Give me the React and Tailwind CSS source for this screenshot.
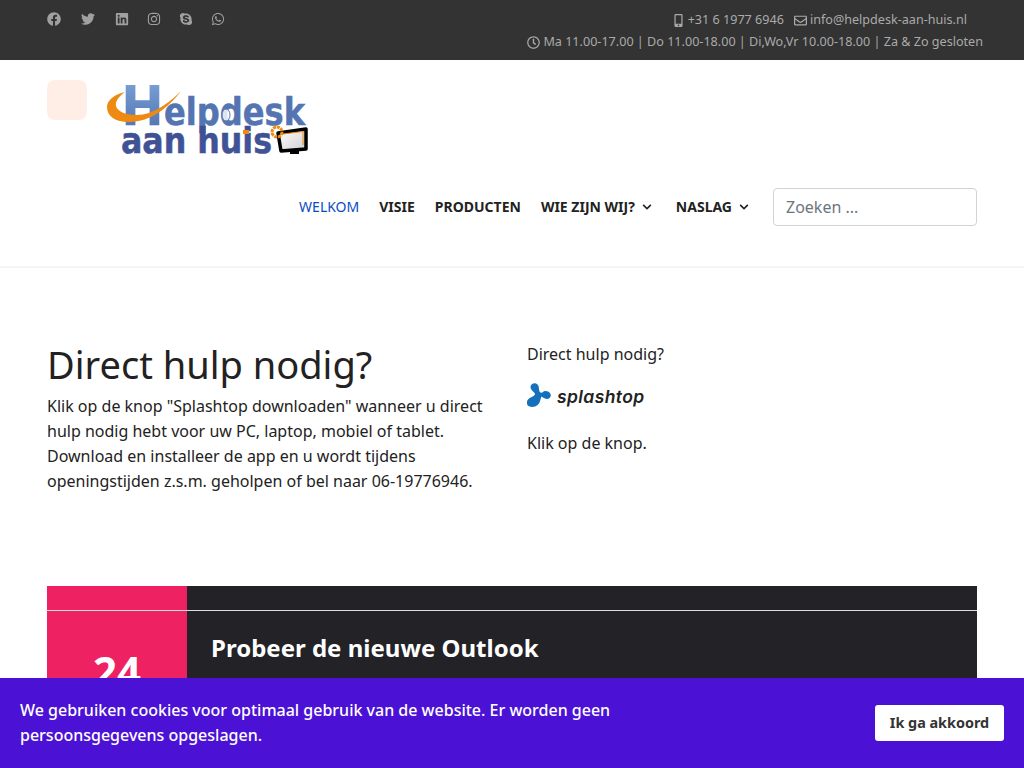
import { FaFacebook, FaTwitter, FaLinkedin, FaInstagram, FaSkype, FaWhatsapp, FaMobileAlt, FaChevronDown, FaRegEnvelope, FaRegClock } from 'react-icons/fa'

const socials = [
  { icon: FaFacebook, w: 'w-[34px]' },
  { icon: FaTwitter, w: 'w-[34px]' },
  { icon: FaLinkedin, w: 'w-[32px]' },
  { icon: FaInstagram, w: 'w-[32px]' },
  { icon: FaSkype, w: 'w-[32px]' },
  { icon: FaWhatsapp, w: 'w-[32px]' },
]

function TopBar() {
  return (
    <div className="h-[60px] bg-[#333333] flex justify-between text-[12.6px] leading-[22px] text-[#aaaaaa]">
      <div className="flex items-start pt-[12px] pl-[47px]">
        {socials.map((s, i) => {
          const Icon = s.icon
          return (
            <span key={i} className={`${s.w} h-[14px] flex items-center`}>
              <Icon className="text-[14px] text-[#a0a0a0]" />
            </span>
          )
        })}
      </div>
      <div className="flex flex-col items-end pt-[9px]">
        <div className="flex items-center pr-[57px]">
          <FaMobileAlt className="text-[13px] mr-[3px]" />
          <span>+31 6 1977 6946</span>
          <FaRegEnvelope className="text-[13px] ml-[10px] mr-[3px]" />
          <span>info@helpdesk-aan-huis.nl</span>
        </div>
        <div className="flex items-center pr-[41px]">
          <FaRegClock className="text-[13px] mr-[3px]" />
          <span>Ma 11.00-17.00 | Do 11.00-18.00 | Di,Wo,Vr 10.00-18.00 | Za &amp; Zo gesloten</span>
        </div>
      </div>
    </div>
  )
}

function Logo() {
  return (
    <svg width="202" height="76" viewBox="0 0 202 76" className="block mt-[3px] overflow-visible">
      <defs>
        <linearGradient id="top" x1="0" y1="0" x2="0" y2="1">
          <stop offset="0" stopColor="#7fa9da" />
          <stop offset="1" stopColor="#4c6cad" />
        </linearGradient>
        <linearGradient id="bot" x1="0" y1="0" x2="0" y2="1">
          <stop offset="0" stopColor="#3d4f93" />
          <stop offset="1" stopColor="#43559a" />
        </linearGradient>
        <linearGradient id="screen" x1="0" y1="0" x2="1" y2="1">
          <stop offset="0" stopColor="#ffffff" />
          <stop offset="1" stopColor="#cfcfcf" />
        </linearGradient>
      </defs>
      <text x="14" y="42" fontFamily="'DejaVu Sans', sans-serif" fontWeight="700" fontSize="56" textLength="43" lengthAdjust="spacingAndGlyphs" fill="url(#top)">H</text>
      <text x="57" y="42" fontFamily="'DejaVu Sans', sans-serif" fontWeight="700" fontSize="37" textLength="141" lengthAdjust="spacingAndGlyphs" fill="#5474b2" stroke="#5474b2" strokeWidth="0.5">elpdesk</text>
      <ellipse cx="119" cy="32" rx="4" ry="6" fill="#ffffff" fillOpacity="0.8" stroke="#5474b2" />
      <text x="14" y="70" fontFamily="'DejaVu Sans', sans-serif" fontWeight="700" fontSize="35" textLength="151" lengthAdjust="spacingAndGlyphs" fill="url(#bot)" stroke="#3d4f93" strokeWidth="0.5">aan huis</text>
      <rect x="136" y="47" width="6" height="4" fill="#ee8a12" />
      <path d="M74 8C62 24 44 39 22 39C8 39 0 33 0 24C0 17 8 11 18 9C11 14 8 19 9 23C11 30 22 32 30 32C46 32 62 20 74 8Z" fill="#ee8a12" />
      <path d="M171 50L199 46L199 66L174 68Z" fill="url(#screen)" stroke="#000000" strokeWidth="3.5" strokeLinejoin="round" />
      <path d="M183 68h9v3h-9z" fill="#000000" />
      <path d="M176 51L196 48.500V62" stroke="#ee8a12" fill="none" />
      <circle cx="170" cy="49" r="5" fill="none" stroke="#ee8a12" strokeWidth="3" strokeDasharray="3 0.800" />
    </svg>
  )
}

function NavItem({ children, active, caret }) {
  return (
    <a className={`flex items-center text-[14px] leading-[20px] uppercase ${active ? 'text-[#0b4bc4]' : 'font-bold text-[#222222]'}`}>
      {children}
      {caret && <FaChevronDown className="text-[10px] ml-[7px] mr-[4px] text-[#222222]" />}
    </a>
  )
}

function Header() {
  return (
    <header className="h-[208px] border-b-2 border-[#f5f5f5] px-[47px] pt-[20px]">
      <div className="flex items-start gap-[20px]">
        <div className="w-[40px] h-[40px] rounded-[8px] bg-[#ffeee6]" />
        <Logo />
      </div>
      <div className="flex items-center justify-end mt-[29px]">
        <nav className="flex items-center gap-[20px]">
          <NavItem active>Welkom</NavItem>
          <NavItem>Visie</NavItem>
          <NavItem>Producten</NavItem>
          <NavItem caret>Wie zijn wij?</NavItem>
          <NavItem caret>Naslag</NavItem>
        </nav>
        <input
          placeholder="Zoeken ..."
          className="ml-[20px] w-[204px] h-[38px] rounded-[4px] border border-[#ced4da] px-[12px] text-[16px] text-[#495057] placeholder:text-[#6c757d] outline-none"
        />
      </div>
    </header>
  )
}

function SplashtopLogo() {
  return (
    <div className="flex items-start h-[24px]">
      <svg width="26" height="24" viewBox="0 0 26 24">
        <path d="M3.500 4C3.500 1 8 -1 10.500 1.500C12.500 3.500 11.500 6 12.500 8.500C13.500 10 15 10 16 9C17 8 19 7.500 21 8.500C24.500 10 24.500 14 22 15.500C20 16.500 17 15.500 14.500 13.500C13.500 15.500 13.500 18 12 20.500C9.500 24 5 24.500 2.500 23.500C-0.500 22.500 -1 19 1 16.500C3 14 6.500 14 8 11.500C8.500 9.500 3.500 7.500 3.500 4Z" fill="#1470bd" />
      </svg>
      <span className="ml-[4px] mt-[2px] text-[17.5px] leading-[24px] font-semibold italic text-[#222222] font-['Inter',sans-serif] tracking-[0.4px]">splashtop</span>
    </div>
  )
}

function Intro() {
  return (
    <section className="mx-[47px] mt-[73px] grid grid-cols-2 gap-[30px] text-[16px] leading-[25px] text-[#222222]">
      <div>
        <h1 className="text-[38px] leading-[46px] font-normal mb-[7px]">Direct hulp nodig?</h1>
        <p>
          Klik op de knop "Splashtop downloaden" wanneer u direct hulp nodig hebt voor uw PC, laptop, mobiel of tablet.
          Download en installeer de app en u wordt tijdens openingstijden z.s.m. geholpen of bel naar 06-19776946.
        </p>
      </div>
      <div className="pt-[1px]">
        <p className="mb-[16px]">Direct hulp nodig?</p>
        <SplashtopLogo />
        <p className="mt-[24px]">Klik op de knop.</p>
      </div>
    </section>
  )
}

function NewsCard() {
  return (
    <article className="mx-[47px] mt-[92px] bg-[#222227]">
      <div className="h-[24px] flex">
        <div className="w-[140px] bg-[#ee2163]" />
      </div>
      <div className="h-px bg-[#dddddd]" />
      <div className="flex h-[200px]">
        <div className="w-[140px] bg-[#ee2163] flex justify-center pt-[36px]">
          <span className="text-[42px] leading-[48px] font-bold text-white">24</span>
        </div>
        <div className="pl-[24px] pt-[19px]">
          <h2 className="text-[24px] leading-[36px] font-bold text-white">Probeer de nieuwe Outlook</h2>
        </div>
      </div>
    </article>
  )
}

function CookieBar() {
  return (
    <div className="fixed left-0 right-0 bottom-0 h-[90px] bg-[#4b12d6] flex items-center justify-between pl-[20px] pr-[20px]">
      <p className="w-[680px] text-[16px] leading-[25px] font-medium text-white">
        We gebruiken cookies voor optimaal gebruik van de website. Er worden geen persoonsgegevens opgeslagen.
      </p>
      <button className="w-[129px] h-[36px] rounded-[3px] bg-white text-[14.4px] font-bold text-[#333333]">Ik ga akkoord</button>
    </div>
  )
}

export default function App() {
  return (
    <div className="h-screen overflow-hidden bg-white font-['Noto_Sans',sans-serif]">
      <TopBar />
      <Header />
      <Intro />
      <NewsCard />
      <CookieBar />
    </div>
  )
}
